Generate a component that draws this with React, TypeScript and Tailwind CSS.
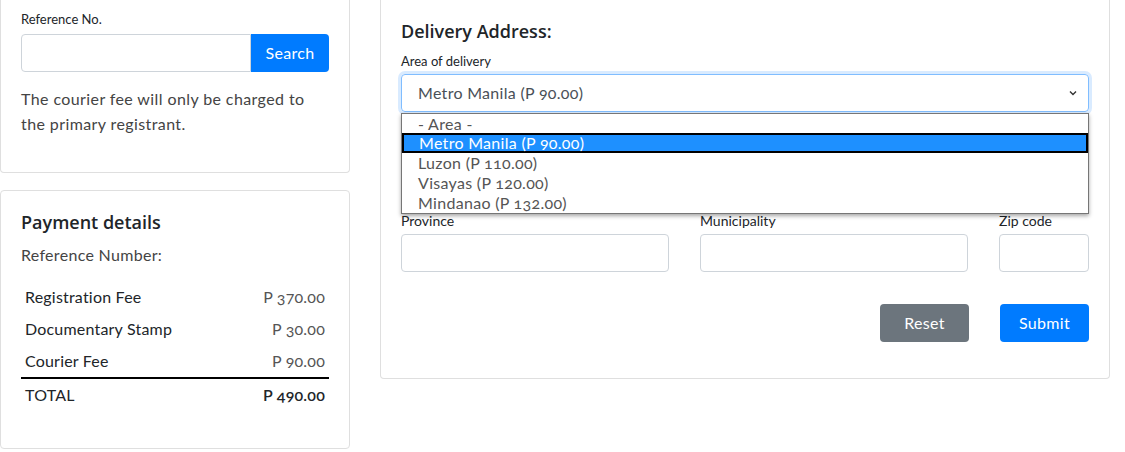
import React from "react";

const body = "font-['Lato','Open_Sans',sans-serif] oldstyle-nums";
const head = "font-['Open_Sans','Noto_Sans',sans-serif]";

function Row({ label, value, bold }: { label: string; value: string; bold?: boolean }) {
  return (
    <div className="flex justify-between px-[4px] h-[32px] items-center text-[16px] tracking-[0.2px]">
      <span className="text-[#212529] font-normal">{label}</span>
      <span className={bold ? "text-[#212529] font-semibold" : "text-[#555] font-normal"}>{value}</span>
    </div>
  );
}

export default function App() {
  return (
    <div className={`w-[1125px] h-[452px] bg-white overflow-hidden ${body} text-[#212529]`}>
      <div className="flex gap-[30px] items-start">
        <div className="w-[350px] flex flex-col gap-[17px]">
          <div className="border-x border-b border-[#dfdfdf] rounded-b-[4px] px-[20px] pt-[10px] pb-[36px]">
            <div className="text-[13px] leading-[19.5px] mb-[4.5px]">Reference No.</div>
            <div className="flex h-[38px]">
              <input className="flex-1 min-w-0 border border-[#ced4da] rounded-l-[4px] outline-none px-3" />
              <button className="w-[78px] bg-[#007bff] text-white text-[16px] tracking-[0.3px] rounded-r-[4px]">Search</button>
            </div>
            <p className="mt-[14px] max-w-[295px] text-[16px] leading-[25px] text-[#444] tracking-[0.4px]">
              The courier fee will only be charged to the primary registrant.
            </p>
          </div>
          <div className="border border-[#dfdfdf] rounded-[4px] px-[20px] pt-[20px] pb-[37px]">
            <h3 className={`${head} font-semibold text-[18px] leading-[22px] text-[#212529]`}>Payment details</h3>
            <div className="mt-[10px] text-[16px] leading-[24px] text-[#444] tracking-[0.3px]">Reference Number:</div>
            <div className="mt-[14px]">
              <Row label="Registration Fee" value="P 370.00" />
              <Row label="Documentary Stamp" value="P 30.00" />
              <Row label="Courier Fee" value="P 90.00" />
              <div className="h-[2px] bg-black" />
              <Row label="TOTAL" value="P 490.00" bold />
            </div>
          </div>
        </div>

        <div className="w-[730px] border-x border-b border-[#dfdfdf] rounded-b-[4px] px-[20px] pt-[20px] pb-[36px]">
          <h3 className={`${head} font-semibold text-[18px] leading-[22px] text-[#212529]`}>Delivery Address:</h3>
          <div className="mt-[10px] text-[13px] leading-[19.5px]">Area of delivery</div>
          <div className="relative mt-[2.5px]">
            <div className="h-[38px] border border-[#80bdff] rounded-[4px] shadow-[0_0_0_3px_rgba(0,123,255,0.15)] flex items-center justify-between pl-[16px] pr-[10px] text-[16px] tracking-[0.3px] text-[#495057]">
              <span>Metro Manila (P 90.00)</span>
              <svg width="10" height="10" viewBox="0 0 10 10" className="text-[#333]">
                <path d="M2 3.5 L5 6.5 L8 3.5" fill="none" stroke="currentColor" strokeWidth="1.4" />
              </svg>
            </div>
            <div className="absolute left-0 right-0 top-[39px] z-10 bg-white border border-[#767676] shadow-[0_2px_4px_rgba(0,0,0,0.35)] text-[16px] leading-[20px] text-[#555] tracking-[0.3px]">
              <div className="pl-[16px] h-[19px] leading-[19px]">- Area -</div>
              <div className="pl-[15px] h-[20px] leading-[16px] bg-[#1e90ff] text-white border-2 border-black">Metro Manila (P 90.00)</div>
              <div className="pl-[16px] h-[20px]">Luzon (P 110.00)</div>
              <div className="pl-[16px] h-[20px]">Visayas (P 120.00)</div>
              <div className="pl-[16px] h-[20px]">Mindanao (P 132.00)</div>
            </div>
          </div>
          <div className="mt-[99px] grid grid-cols-[268px_268px_1fr] gap-x-[31px]">
            <label className="text-[14px] leading-[20px]">Province</label>
            <label className="text-[14px] leading-[20px]">Municipality</label>
            <label className="text-[14px] leading-[20px]">Zip code</label>
            <input className="mt-[3px] h-[38px] border border-[#ced4da] rounded-[4px] outline-none" />
            <input className="mt-[3px] h-[38px] border border-[#ced4da] rounded-[4px] outline-none" />
            <input className="mt-[3px] h-[38px] border border-[#ced4da] rounded-[4px] outline-none min-w-0" />
          </div>
          <div className="mt-[32px] flex justify-end gap-[31px]">
            <button className="w-[89px] h-[38px] rounded-[4px] bg-[#6c757d] text-white text-[16px] tracking-[0.3px]">Reset</button>
            <button className="w-[89px] h-[38px] rounded-[4px] bg-[#007bff] text-white text-[16px] tracking-[0.3px]">Submit</button>
          </div>
        </div>
      </div>
    </div>
  );
}
